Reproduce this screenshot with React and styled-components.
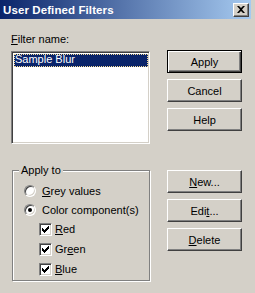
import React from "react";
import styled, { createGlobalStyle, css } from "styled-components";

const Global = createGlobalStyle`
  html, body { margin: 0; padding: 0; background: #d4d0c8; }
  body { font-family: "Liberation Sans", Arial, sans-serif; font-size: 11px; color: #000; }
`;

const Window = styled.div`
  width: 255px;
  height: 293px;
  box-sizing: border-box;
  padding-right: 4px;
  background: #d4d0c8;
  overflow: hidden;
  display: flex;
  flex-direction: column;
`;

const TitleBar = styled.div`
  height: 19px;
  flex: none;
  display: flex;
  align-items: center;
  justify-content: space-between;
  padding: 0 2px 0 3px;
  background: linear-gradient(to right, #0a246a, #a6caf0);
`;

const Title = styled.span`
  color: #fff;
  font-weight: bold;
  font-size: 11.5px;
  letter-spacing: 0.1px;
`;

const CloseButton = styled.div`
  width: 16px;
  height: 14px;
  box-sizing: border-box;
  background: #d4d0c8;
  border: 1px solid;
  border-color: #fff #404040 #404040 #fff;
  box-shadow: inset -1px -1px #808080;
  display: flex;
  align-items: center;
  justify-content: center;
`;

const Body = styled.div`
  display: flex;
  gap: 17px;
  padding-left: 11px;
`;

const LeftColumn = styled.div`
  width: 139px;
  display: flex;
  flex-direction: column;
`;

const Label = styled.div`
  margin-top: 14px;
  height: 13px;
  line-height: 13px;
`;

const ListBox = styled.div`
  margin-top: 5px;
  height: 93px;
  box-sizing: border-box;
  background: #fff;
  border: 1px solid;
  border-color: #808080 #fff #fff #808080;
  box-shadow: inset 1px 1px #404040, inset -1px -1px #d4d0c8;
  padding: 2px 1px 2px 2px;
`;

const ListItem = styled.div`
  height: 13px;
  line-height: 11px;
  box-sizing: border-box;
  padding-left: 1px;
  white-space: nowrap;
  ${(p) =>
    p.$selected &&
    css`
      background: #0a246a;
      color: #fff;
      outline: 1px dotted #f5dc95;
      outline-offset: -1px;
    `}
`;

const Group = styled.div`
  position: relative;
  margin-top: 26px;
  margin-left: 1px;
  height: 111px;
  box-sizing: border-box;
  border: 1px solid #808080;
  box-shadow: inset 1px 1px #fff, 1px 1px #fff;
  padding: 10px 0 0 11px;
  display: flex;
  flex-direction: column;
`;

const Legend = styled.span`
  position: absolute;
  top: -7px;
  left: 6px;
  padding: 0 2px;
  background: #d4d0c8;
  line-height: 13px;
`;

const OptionRow = styled.label`
  display: flex;
  align-items: center;
  height: ${(p) => p.$h || 19}px;
  padding-left: ${(p) => (p.$indent ? 15 : 0)}px;
  gap: ${(p) => (p.$indent ? 3 : 6)}px;
`;

const Radio = styled.span`
  width: 12px;
  height: 12px;
  box-sizing: border-box;
  border-radius: 50%;
  border: 1px solid;
  border-color: #808080 #fff #fff #808080;
  background: #fff;
  box-shadow: inset 1px 1px #404040, inset -1px -1px #d4d0c8;
  display: flex;
  align-items: center;
  justify-content: center;
  &::after {
    content: "";
    width: 4px;
    height: 4px;
    border-radius: 50%;
    background: ${(p) => (p.$checked ? "#000" : "transparent")};
  }
`;

const Check = styled.span`
  width: 13px;
  height: 13px;
  box-sizing: border-box;
  border: 1px solid;
  border-color: #808080 #fff #fff #808080;
  background: #fff;
  box-shadow: inset 1px 1px #404040, inset -1px -1px #d4d0c8;
  display: flex;
  align-items: center;
  justify-content: center;
`;

const RightColumn = styled.div`
  width: 75px;
  display: flex;
  flex-direction: column;
  padding-top: 31px;
`;

const ButtonGroup = styled.div`
  display: flex;
  flex-direction: column;
  gap: 6px;
  & + & {
    margin-top: 39px;
  }
`;

const Button = styled.div`
  width: 75px;
  height: 23px;
  box-sizing: border-box;
  display: flex;
  align-items: center;
  justify-content: center;
  background: #d4d0c8;
  border: 1px solid;
  ${(p) =>
    p.$default
      ? css`
          border-color: #000;
          box-shadow: inset 1px 1px #fff, inset -1px -1px #404040, inset -2px -2px #808080;
        `
      : css`
          border-color: #fff #404040 #404040 #fff;
          box-shadow: inset -1px -1px #808080;
        `}
`;

const U = styled.span`
  text-decoration: underline;
  text-underline-offset: 1px;
`;

const CheckMark = () => (
  <svg width="7" height="7" viewBox="0 0 7 7">
    <path d="M0 2h1v1h1v1h1V3h1V2h1V1h1V0h1v3H6v1H5v1H4v1H3v1H2V6H1V5H0z" fill="#000" />
  </svg>
);

export default function App() {
  return (
    <>
      <Global />
      <Window>
        <TitleBar>
          <Title>User Defined Filters</Title>
          <CloseButton>
            <svg width="8" height="7" viewBox="0 0 8 7">
              <path d="M0 0h2l2 2 2-2h2L5 3.5 8 7H6L4 5 2 7H0l3-3.5z" fill="#000" />
            </svg>
          </CloseButton>
        </TitleBar>
        <Body>
          <LeftColumn>
            <Label>
              <U>F</U>ilter name:
            </Label>
            <ListBox>
              <ListItem $selected>Sample Blur</ListItem>
            </ListBox>
            <Group>
              <Legend>Apply to</Legend>
              <OptionRow>
                <Radio />
                <span>
                  <U>G</U>rey values
                </span>
              </OptionRow>
              <OptionRow>
                <Radio $checked />
                <span>Color component(s)</span>
              </OptionRow>
              <OptionRow $indent $h={20}>
                <Check>
                  <CheckMark />
                </Check>
                <span>
                  <U>R</U>ed
                </span>
              </OptionRow>
              <OptionRow $indent $h={20}>
                <Check>
                  <CheckMark />
                </Check>
                <span>
                  Gr<U>e</U>en
                </span>
              </OptionRow>
              <OptionRow $indent $h={20}>
                <Check>
                  <CheckMark />
                </Check>
                <span>
                  <U>B</U>lue
                </span>
              </OptionRow>
            </Group>
          </LeftColumn>
          <RightColumn>
            <ButtonGroup>
              <Button $default>Apply</Button>
              <Button>Cancel</Button>
              <Button>Help</Button>
            </ButtonGroup>
            <ButtonGroup>
              <Button>
                <span>
                  <U>N</U>ew...
                </span>
              </Button>
              <Button>
                <span>
                  Edi<U>t</U>...
                </span>
              </Button>
              <Button>
                <span>
                  <U>D</U>elete
                </span>
              </Button>
            </ButtonGroup>
          </RightColumn>
        </Body>
      </Window>
    </>
  );
}
